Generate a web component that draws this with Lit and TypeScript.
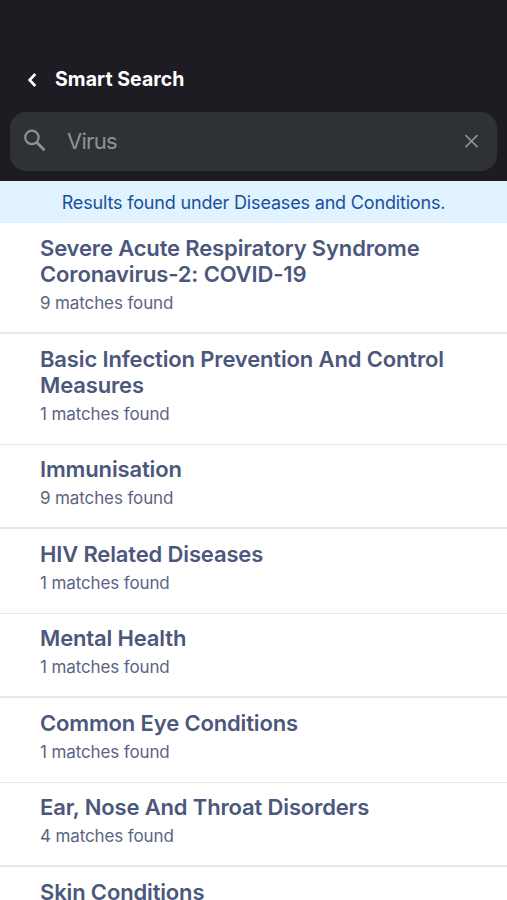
import { LitElement, html, css } from "lit";
import { customElement, property } from "lit/decorators.js";

@customElement("result-row")
class ResultRow extends LitElement {
  @property() name = "";
  @property({ type: Number }) matches = 0;

  static styles = css`
    :host { display: block; box-sizing: border-box; padding: 11.8px 40px 0; height: 84.5px; border-top: 1px solid #e9e9eb; }
    :host([tall]) { height: 110.5px; }
    :host(:first-child) { border-top-color: transparent; }
    :host(:nth-child(even)) { margin-top: -1px; height: 85.5px; border-top: 2px solid #e8e8ea; }
    :host([tall]:nth-child(even)) { height: 111.5px; }
    .title { margin: 0; font-size: 22px; line-height: 26px; font-weight: 600; letter-spacing: -0.15px; color: #4c577c; }
    .count { margin: 3.9px 0 0; font-size: 17px; line-height: 24px; color: #5c6484; letter-spacing: -0.12px; }
  `;

  render() {
    return html`
      <h2 class="title">${this.name}</h2>
      <p class="count">${this.matches} matches found</p>
    `;
  }
}

@customElement("app-root")
class AppRoot extends LitElement {
  static styles = css`
    :host { display: flex; flex-direction: column; height: 900px; overflow: hidden; background: #fff; font-family: Inter, "Liberation Sans", sans-serif; }
    .top { box-sizing: border-box; flex: none; height: 181px; padding: 62px 10px 0; background: #1d1c23; }
    .bar { display: flex; align-items: center; height: 34px; padding-left: 16px; gap: 17px; color: #fff; }
    .heading { margin: 0; font-size: 19.5px; font-weight: 650; letter-spacing: 0.05px; }
    .search { display: flex; align-items: center; box-sizing: border-box; height: 59px; margin-top: 15.5px; padding: 0 17px 0 13px; border-radius: 16px; background: #2e3235; color: #8c9198; }
    .query { flex: 1; margin-left: 20px; font-size: 22px; letter-spacing: -0.7px; }
    .banner { flex: none; height: 41.5px; line-height: 43px; text-align: center; font-size: 18px; letter-spacing: -0.17px; background: #e0f3ff; color: #1a4f9d; }
    svg { flex: none; display: block; }
  `;

  rows = [
    { name: "Severe Acute Respiratory Syndrome Coronavirus-2: COVID-19", tall: true, n: 9 },
    { name: "Basic Infection Prevention And Control Measures", tall: true, n: 1 },
    { name: "Immunisation", tall: false, n: 9 },
    { name: "HIV Related Diseases", tall: false, n: 1 },
    { name: "Mental Health", tall: false, n: 1 },
    { name: "Common Eye Conditions", tall: false, n: 1 },
    { name: "Ear, Nose And Throat Disorders", tall: false, n: 4 },
    { name: "Skin Conditions", tall: false, n: 2 },
  ];

  render() {
    return html`
      <header class="top">
        <div class="bar">
          <svg width="12" height="16" viewBox="0 0 12 16" fill="none" stroke="currentColor" stroke-width="2.6"><path d="M9.3 3 3.6 9l5.7 6" /></svg>
          <h1 class="heading">Smart Search</h1>
        </div>
        <div class="search">
          <svg width="24" height="24" viewBox="0 0 24 24" fill="none" stroke="currentColor"><circle cx="8.9" cy="8.4" r="6.7" stroke-width="2.2" /><path d="m13.5 13.2 8 8" stroke-width="2.8" /></svg>
          <span class="query">Virus</span>
          <svg width="17" height="17" viewBox="0 0 17 17" fill="none" stroke="currentColor" stroke-width="1.7"><path d="m2.5 2.2 12 12M14.5 2.2l-12 12" /></svg>
        </div>
      </header>
      <div class="banner">Results found under Diseases and Conditions.</div>
      <main>
        ${this.rows.map((r) => html`<result-row ?tall=${r.tall} .name=${r.name} .matches=${r.n}></result-row>`)}
      </main>
    `;
  }
}
